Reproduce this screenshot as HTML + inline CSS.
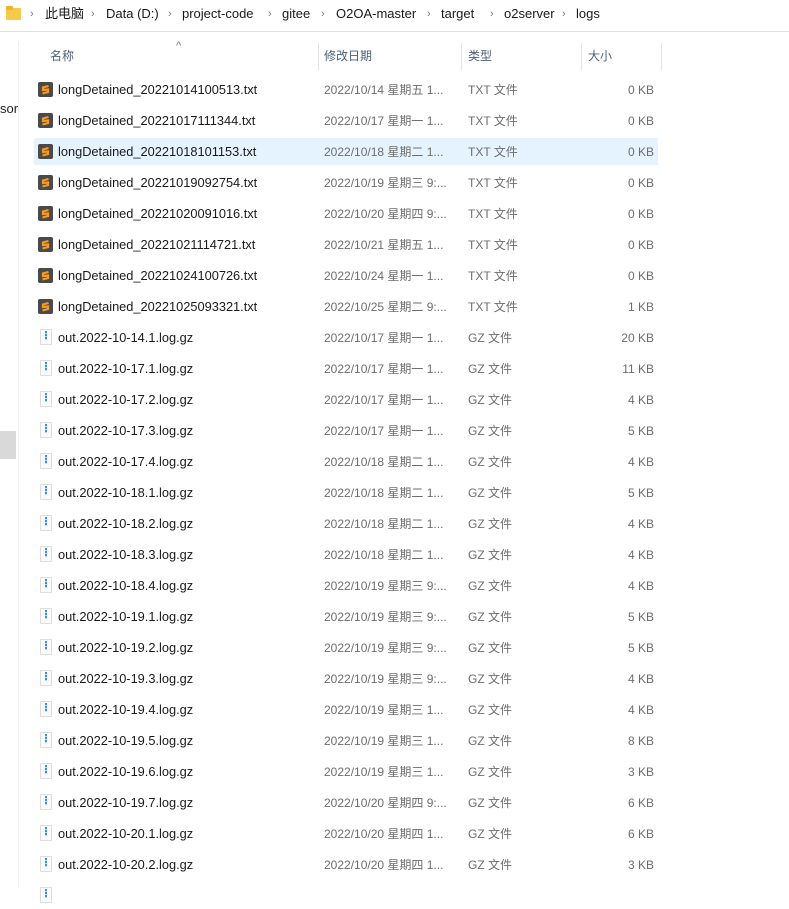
<!DOCTYPE html>
<html><head><meta charset="utf-8"><style>
*{margin:0;padding:0;box-sizing:border-box}
body{width:789px;height:888px;background:#fff;position:relative;overflow:hidden;font-family:"Liberation Sans","Noto Sans CJK SC",sans-serif;font-size:12px;color:#000;line-height:16px}
span{line-height:16px;display:inline-block;height:16px}
.a{position:absolute;white-space:nowrap}
.bc{top:6px;font-size:13px;color:#1a1a1a}
.sep{top:6px;font-size:11px;color:#777}
.hdr{top:48px;color:#4c607a;font-size:12px}
.vd{position:absolute;top:43px;width:1px;height:27px;background:#e5e5e5}
.row{position:absolute;left:34px;width:624px;height:27px}
.row.sel{background:#e5f3ff}
.nm{position:absolute;left:24px;top:6px;font-size:12.8px;color:#1a1a1a;white-space:nowrap}
.dt{position:absolute;left:290px;top:6px;color:#6d6d6d;white-space:nowrap}
.tp{position:absolute;left:434px;top:6px;color:#6d6d6d;white-space:nowrap}
.sz{position:absolute;right:4px;top:6px;color:#6d6d6d;white-space:nowrap}
.ic1{position:absolute;left:4px;top:6px;width:15px;height:15px;background:#4a4a4a;border-radius:2px}
.ic2{position:absolute;left:6px;top:5px;width:12px;height:16px;background:#fafafa;border:1px solid #ddd;border-radius:1px}
.ic2:after{content:"";position:absolute;left:4px;top:1px;width:2px;height:9px;background:repeating-linear-gradient(#3a8ee6 0 2px,#bcd8f5 2px 3px)}
</style></head><body>
<div class="a" style="left:6px;top:8px;width:15px;height:12px;background:#f7c948;border-radius:1px"></div>
<div class="a" style="left:6px;top:6px;width:7px;height:4px;background:#e8b52f;border-radius:1px"></div>
<span class="a sep" style="left:30px">›</span>
<span class="a bc" style="left:45px">此电脑</span>
<span class="a sep" style="left:91px">›</span>
<span class="a bc" style="left:106px">Data (D:)</span>
<span class="a sep" style="left:168px">›</span>
<span class="a bc" style="left:182px">project-code</span>
<span class="a sep" style="left:268px">›</span>
<span class="a bc" style="left:282px">gitee</span>
<span class="a sep" style="left:321px">›</span>
<span class="a bc" style="left:336px">O2OA-master</span>
<span class="a sep" style="left:427px">›</span>
<span class="a bc" style="left:441px">target</span>
<span class="a sep" style="left:490px">›</span>
<span class="a bc" style="left:504px">o2server</span>
<span class="a sep" style="left:562px">›</span>
<span class="a bc" style="left:576px">logs</span>
<div class="a" style="left:0;top:31px;width:789px;height:1px;background:#e0e0e0"></div>
<div class="a" style="left:18px;top:42px;width:1px;height:846px;background:#f0f0f0"></div>
<span class="a" style="left:0;top:101px;font-size:13px;color:#222">sor</span>
<div class="a" style="left:0;top:431px;width:16px;height:28px;background:#d9d9d9"></div>
<span class="a" style="left:176px;top:38px;font-size:11px;color:#777">^</span>
<span class="a hdr" style="left:50px">名称</span>
<div class="vd" style="left:318px"></div>
<span class="a hdr" style="left:324px">修改日期</span>
<div class="vd" style="left:461px"></div>
<span class="a hdr" style="left:468px">类型</span>
<div class="vd" style="left:581px"></div>
<span class="a hdr" style="left:588px">大小</span>
<div class="vd" style="left:661px"></div>
<div class="row" style="top:76px"><div class="ic1"><svg width="15" height="15"><path d="M10.5 4 L5 5.5 L5 8 L10 7.5 L10 10 L4.5 11.5" fill="none" stroke="#f79a1e" stroke-width="2.2"/></svg></div><span class="nm">longDetained_20221014100513.txt</span><span class="dt">2022/10/14 星期五 1...</span><span class="tp">TXT 文件</span><span class="sz">0 KB</span></div>
<div class="row" style="top:107px"><div class="ic1"><svg width="15" height="15"><path d="M10.5 4 L5 5.5 L5 8 L10 7.5 L10 10 L4.5 11.5" fill="none" stroke="#f79a1e" stroke-width="2.2"/></svg></div><span class="nm">longDetained_20221017111344.txt</span><span class="dt">2022/10/17 星期一 1...</span><span class="tp">TXT 文件</span><span class="sz">0 KB</span></div>
<div class="row sel" style="top:138px"><div class="ic1"><svg width="15" height="15"><path d="M10.5 4 L5 5.5 L5 8 L10 7.5 L10 10 L4.5 11.5" fill="none" stroke="#f79a1e" stroke-width="2.2"/></svg></div><span class="nm">longDetained_20221018101153.txt</span><span class="dt">2022/10/18 星期二 1...</span><span class="tp">TXT 文件</span><span class="sz">0 KB</span></div>
<div class="row" style="top:169px"><div class="ic1"><svg width="15" height="15"><path d="M10.5 4 L5 5.5 L5 8 L10 7.5 L10 10 L4.5 11.5" fill="none" stroke="#f79a1e" stroke-width="2.2"/></svg></div><span class="nm">longDetained_20221019092754.txt</span><span class="dt">2022/10/19 星期三 9:...</span><span class="tp">TXT 文件</span><span class="sz">0 KB</span></div>
<div class="row" style="top:200px"><div class="ic1"><svg width="15" height="15"><path d="M10.5 4 L5 5.5 L5 8 L10 7.5 L10 10 L4.5 11.5" fill="none" stroke="#f79a1e" stroke-width="2.2"/></svg></div><span class="nm">longDetained_20221020091016.txt</span><span class="dt">2022/10/20 星期四 9:...</span><span class="tp">TXT 文件</span><span class="sz">0 KB</span></div>
<div class="row" style="top:231px"><div class="ic1"><svg width="15" height="15"><path d="M10.5 4 L5 5.5 L5 8 L10 7.5 L10 10 L4.5 11.5" fill="none" stroke="#f79a1e" stroke-width="2.2"/></svg></div><span class="nm">longDetained_20221021114721.txt</span><span class="dt">2022/10/21 星期五 1...</span><span class="tp">TXT 文件</span><span class="sz">0 KB</span></div>
<div class="row" style="top:262px"><div class="ic1"><svg width="15" height="15"><path d="M10.5 4 L5 5.5 L5 8 L10 7.5 L10 10 L4.5 11.5" fill="none" stroke="#f79a1e" stroke-width="2.2"/></svg></div><span class="nm">longDetained_20221024100726.txt</span><span class="dt">2022/10/24 星期一 1...</span><span class="tp">TXT 文件</span><span class="sz">0 KB</span></div>
<div class="row" style="top:293px"><div class="ic1"><svg width="15" height="15"><path d="M10.5 4 L5 5.5 L5 8 L10 7.5 L10 10 L4.5 11.5" fill="none" stroke="#f79a1e" stroke-width="2.2"/></svg></div><span class="nm">longDetained_20221025093321.txt</span><span class="dt">2022/10/25 星期二 9:...</span><span class="tp">TXT 文件</span><span class="sz">1 KB</span></div>
<div class="row" style="top:324px"><div class="ic2"></div><span class="nm">out.2022-10-14.1.log.gz</span><span class="dt">2022/10/17 星期一 1...</span><span class="tp">GZ 文件</span><span class="sz">20 KB</span></div>
<div class="row" style="top:355px"><div class="ic2"></div><span class="nm">out.2022-10-17.1.log.gz</span><span class="dt">2022/10/17 星期一 1...</span><span class="tp">GZ 文件</span><span class="sz">11 KB</span></div>
<div class="row" style="top:386px"><div class="ic2"></div><span class="nm">out.2022-10-17.2.log.gz</span><span class="dt">2022/10/17 星期一 1...</span><span class="tp">GZ 文件</span><span class="sz">4 KB</span></div>
<div class="row" style="top:417px"><div class="ic2"></div><span class="nm">out.2022-10-17.3.log.gz</span><span class="dt">2022/10/17 星期一 1...</span><span class="tp">GZ 文件</span><span class="sz">5 KB</span></div>
<div class="row" style="top:448px"><div class="ic2"></div><span class="nm">out.2022-10-17.4.log.gz</span><span class="dt">2022/10/18 星期二 1...</span><span class="tp">GZ 文件</span><span class="sz">4 KB</span></div>
<div class="row" style="top:479px"><div class="ic2"></div><span class="nm">out.2022-10-18.1.log.gz</span><span class="dt">2022/10/18 星期二 1...</span><span class="tp">GZ 文件</span><span class="sz">5 KB</span></div>
<div class="row" style="top:510px"><div class="ic2"></div><span class="nm">out.2022-10-18.2.log.gz</span><span class="dt">2022/10/18 星期二 1...</span><span class="tp">GZ 文件</span><span class="sz">4 KB</span></div>
<div class="row" style="top:541px"><div class="ic2"></div><span class="nm">out.2022-10-18.3.log.gz</span><span class="dt">2022/10/18 星期二 1...</span><span class="tp">GZ 文件</span><span class="sz">4 KB</span></div>
<div class="row" style="top:572px"><div class="ic2"></div><span class="nm">out.2022-10-18.4.log.gz</span><span class="dt">2022/10/19 星期三 9:...</span><span class="tp">GZ 文件</span><span class="sz">4 KB</span></div>
<div class="row" style="top:603px"><div class="ic2"></div><span class="nm">out.2022-10-19.1.log.gz</span><span class="dt">2022/10/19 星期三 9:...</span><span class="tp">GZ 文件</span><span class="sz">5 KB</span></div>
<div class="row" style="top:634px"><div class="ic2"></div><span class="nm">out.2022-10-19.2.log.gz</span><span class="dt">2022/10/19 星期三 9:...</span><span class="tp">GZ 文件</span><span class="sz">5 KB</span></div>
<div class="row" style="top:665px"><div class="ic2"></div><span class="nm">out.2022-10-19.3.log.gz</span><span class="dt">2022/10/19 星期三 9:...</span><span class="tp">GZ 文件</span><span class="sz">4 KB</span></div>
<div class="row" style="top:696px"><div class="ic2"></div><span class="nm">out.2022-10-19.4.log.gz</span><span class="dt">2022/10/19 星期三 1...</span><span class="tp">GZ 文件</span><span class="sz">4 KB</span></div>
<div class="row" style="top:727px"><div class="ic2"></div><span class="nm">out.2022-10-19.5.log.gz</span><span class="dt">2022/10/19 星期三 1...</span><span class="tp">GZ 文件</span><span class="sz">8 KB</span></div>
<div class="row" style="top:758px"><div class="ic2"></div><span class="nm">out.2022-10-19.6.log.gz</span><span class="dt">2022/10/19 星期三 1...</span><span class="tp">GZ 文件</span><span class="sz">3 KB</span></div>
<div class="row" style="top:789px"><div class="ic2"></div><span class="nm">out.2022-10-19.7.log.gz</span><span class="dt">2022/10/20 星期四 9:...</span><span class="tp">GZ 文件</span><span class="sz">6 KB</span></div>
<div class="row" style="top:820px"><div class="ic2"></div><span class="nm">out.2022-10-20.1.log.gz</span><span class="dt">2022/10/20 星期四 1...</span><span class="tp">GZ 文件</span><span class="sz">6 KB</span></div>
<div class="row" style="top:851px"><div class="ic2"></div><span class="nm">out.2022-10-20.2.log.gz</span><span class="dt">2022/10/20 星期四 1...</span><span class="tp">GZ 文件</span><span class="sz">3 KB</span></div>
<div class="row" style="top:882px"><div class="ic2"></div></div>
</body></html>
